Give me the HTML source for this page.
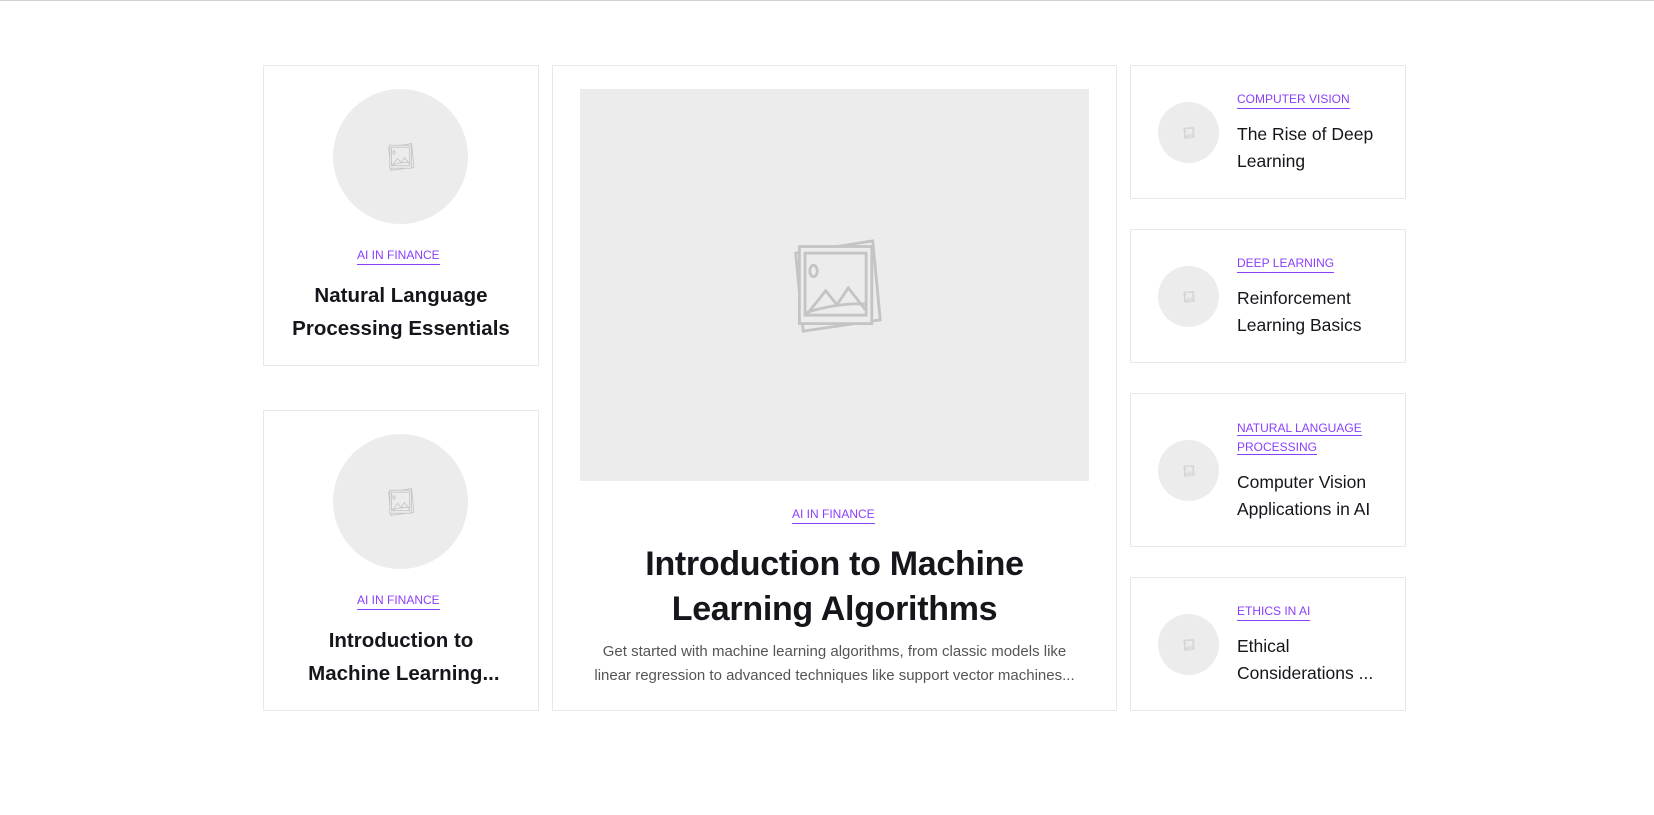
<!DOCTYPE html>
<html><head><meta charset="utf-8"><style>
*{margin:0;padding:0;box-sizing:border-box}
body{width:1654px;height:815px;background:#fff;position:relative;overflow:hidden;font-family:"Liberation Sans",sans-serif;border-top:1px solid #d0d0d0}
.card{position:absolute;border:1px solid #e8e8e8;background:#fff}
.abs{position:absolute}
.circ{position:absolute;border-radius:50%;background:#ececec;display:flex;align-items:center;justify-content:center}
.lab{position:absolute;color:#8a3ffc;font-size:12px;line-height:14px;border-bottom:1px solid #8a3ffc;padding-bottom:2px;white-space:nowrap}
.t{position:absolute;color:#16151c;text-align:center}
</style></head><body>
<svg width="0" height="0" style="position:absolute"><defs>
<g id="ic" fill="none" stroke="#c4c4c4" stroke-width="3">
<path d="M6 15 L88 2 L96 86 L14 98 Z"/>
<rect x="10" y="8" width="77" height="82" fill="#ececec"/>
<rect x="16" y="15" width="65" height="66"/>
<ellipse cx="25" cy="34" rx="4" ry="6"/>
<path d="M18 80 L38 55 L50 70 L62 52 L80 75 M18 78 Q50 68 80 69"/>
</g></defs></svg>

<div class="card" style="left:263px;top:64px;width:276px;height:301px"></div>
<div class="circ" style="left:333px;top:88px;width:135px;height:135px"><svg width="28" height="30" viewBox="0 0 100 100"><use href="#ic"/></svg></div>
<div class="lab" style="left:357px;top:247px">AI IN FINANCE</div>
<div class="t" style="left:263px;width:276px;top:278px;font-size:20.5px;font-weight:bold;line-height:33px">Natural Language<br>Processing Essentials</div>

<div class="card" style="left:263px;top:409px;width:276px;height:301px"></div>
<div class="circ" style="left:333px;top:433px;width:135px;height:135px"><svg width="28" height="30" viewBox="0 0 100 100"><use href="#ic"/></svg></div>
<div class="lab" style="left:357px;top:592px">AI IN FINANCE</div>
<div class="t" style="left:263px;width:276px;top:623px;font-size:20.5px;font-weight:bold;line-height:33px">Introduction to<br>&nbsp;Machine Learning...</div>

<div class="card" style="left:552px;top:64px;width:565px;height:646px"></div>
<div class="abs" style="left:580px;top:88px;width:509px;height:392px;background:#ececec"></div>
<svg class="abs" style="left:790px;top:232px" width="94" height="106" viewBox="0 0 100 100"><use href="#ic"/></svg>
<div class="lab" style="left:792px;top:506px">AI IN FINANCE</div>
<div class="t" style="left:552px;width:565px;top:541px;font-size:34px;font-weight:bold;line-height:45px;letter-spacing:-0.3px">Introduction to Machine<br>Learning Algorithms</div>
<div class="t" style="left:552px;width:565px;top:639px;font-size:15px;line-height:24px;color:#555">Get started with machine learning algorithms, from classic models like<br>linear regression to advanced techniques like support vector machines...</div>

<div class="card" style="left:1130px;top:64px;width:276px;height:134px"></div>
<div class="circ" style="left:1158px;top:101px;width:61px;height:61px"><svg width="12" height="14" viewBox="0 0 100 100"><use href="#ic"/></svg></div>
<div class="lab" style="left:1237px;top:91px">COMPUTER VISION</div>
<div class="t" style="left:1237px;top:120px;text-align:left;font-size:17.5px;line-height:27px">The Rise of Deep<br>Learning</div>

<div class="card" style="left:1130px;top:228px;width:276px;height:134px"></div>
<div class="circ" style="left:1158px;top:265px;width:61px;height:61px"><svg width="12" height="14" viewBox="0 0 100 100"><use href="#ic"/></svg></div>
<div class="lab" style="left:1237px;top:255px">DEEP LEARNING</div>
<div class="t" style="left:1237px;top:284px;text-align:left;font-size:17.5px;line-height:27px">Reinforcement<br>Learning Basics</div>

<div class="card" style="left:1130px;top:392px;width:276px;height:154px"></div>
<div class="circ" style="left:1158px;top:439px;width:61px;height:61px"><svg width="12" height="14" viewBox="0 0 100 100"><use href="#ic"/></svg></div>
<div class="lab" style="left:1237px;top:418px;border:none;line-height:19px;padding:0"><span style="border-bottom:1px solid #8a3ffc">NATURAL LANGUAGE</span><br><span style="border-bottom:1px solid #8a3ffc">PROCESSING</span></div>
<div class="t" style="left:1237px;top:468px;text-align:left;font-size:17.5px;line-height:27px">Computer Vision<br>Applications in AI</div>

<div class="card" style="left:1130px;top:576px;width:276px;height:134px"></div>
<div class="circ" style="left:1158px;top:613px;width:61px;height:61px"><svg width="12" height="14" viewBox="0 0 100 100"><use href="#ic"/></svg></div>
<div class="lab" style="left:1237px;top:603px">ETHICS IN AI</div>
<div class="t" style="left:1237px;top:632px;text-align:left;font-size:17.5px;line-height:27px">Ethical<br>Considerations ...</div>
</body></html>
